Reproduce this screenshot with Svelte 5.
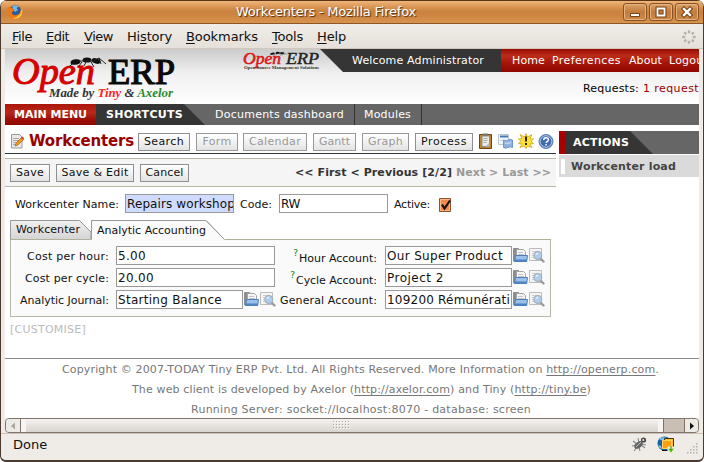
<script>
  function fit(node, width) {
    const natural = node.getBoundingClientRect().width;
    const count = [...node.textContent].length;
    node.style.letterSpacing = `${(width - natural) / count}px`;
  }

  const menus = [
    ['', 'F', 'ile', 20, 14], ['', 'E', 'dit', 23, 15], ['', 'V', 'iew', 29, 14],
    ['Hi', 's', 'tory', 45, 14], ['', 'B', 'ookmarks', 72, 14], ['', 'T', 'ools', 31, 14], ['', 'H', 'elp', 29, 0]
  ];
  const views = [
    ['Search', 52, 40, true, 6], ['Form', 42, 29, false, 5], ['Calendar', 64, 52, false, 6],
    ['Gantt', 43, 31, false, 6], ['Graph', 47, 35, false, 6], ['Process', 58, 46, true, 5]
  ];
  const actions = [['Save', 40, 28], ['Save & Edit', 78, 67], ['Cancel', 49, 38]];
  const rows = [
    { l: 'Cost per hour:', lw: 82, v: '5.00', vw: 28, r: 'Hour Account:', rw: 78, q: true, a: 'Our Super Product', aw: 116 },
    { l: 'Cost per cycle:', lw: 84, v: '20.00', vw: 36, r: 'Cycle Account:', rw: 81, q: true, a: 'Project 2', aw: 57 },
    { l: 'Analytic Journal:', lw: 89, v: 'Starting Balance', vw: 104, r: 'General Account:', rw: 97, q: false, a: '109200 Rémunérati', aw: 123, pick: true }
  ];
</script>

{#snippet t(s, w)}<span class="t" use:fit={w}>{s}</span>{/snippet}

{#snippet picker()}
  <svg class="ic" width="15" height="16" viewBox="0 0 15 16">
    <path d="M.5 14V1.5h5l1 1.5h2v11z" fill="#8b8e90" stroke="#8b8f92" />
    <path d="M3.500 9V2.500h7l2 2V10h-9z" fill="#f5f5f5" stroke="#a5a5a5" />
    <path d="M5 5.500h5M5 7.500h6" stroke="#c5c5c5" />
    <path d="M2.500 8.500h12l-.800 6H1.500z" fill="#9bc0ea" stroke="#4f7fbb" />
    <path d="M2 12.500h12l-.300 2H1.500z" fill="#4d82c4" />
  </svg>
  <svg class="ic" width="16" height="16" viewBox="0 0 16 16">
    <path d="M.500 1.500h12v12H.500z" fill="#f4f4f4" stroke="#bbb" />
    <path d="M3 4.500h7M3 6.500h3M3 8.500h2M3 10.500h2" stroke="#ccc" />
    <path d="M11.500 11.500l3 3" stroke="#9a9a9a" stroke-width="2.400" stroke-linecap="round" />
    <circle cx="8.800" cy="8.500" r="3.900" fill="#afcdee" stroke="#a3afbb" stroke-width="1.200" />
    <path d="M6.800 8q.400-2 2.500-2" stroke="#e8f4ff" fill="none" stroke-width="1.200" />
  </svg>
{/snippet}

{#snippet ant()}
  <g fill="#111" stroke="none">
    <ellipse cx="70.500" cy="13" rx="5" ry="2.700" transform="rotate(-8 70.500 13)" />
    <ellipse cx="82" cy="11" rx="4.500" ry="2.600" />
    <ellipse cx="91" cy="12" rx="4.500" ry="2.600" transform="rotate(15 91 12)" />
  </g>
  <path d="M67 15l-2 2M74 12h16M77 13l-3 4M81 13l-2 4M86 13l3 5M90 11l4-2 2 6M94 9l7 6" fill="none" stroke="#222" stroke-width="1" />
{/snippet}

<div class="window">
  <header class="title">
    <svg width="16" height="16" viewBox="0 0 16 16">
      <circle cx="8" cy="8" r="7.500" fill="#e8831b" />
      <circle cx="8.200" cy="7" r="5.800" fill="#285c9c" />
      <path d="M5 2q4-1.700 7 .500L9.500 4 11 6 8 8 6 5z" fill="#76b6de" />
      <path d="M1 3q1 1 2.700.800Q7 4 6.700 7L4.500 8.400q1.500 3.500 5 2.600 3.600-.900 3.800-4l1.500-1.500Q16 12 11.500 14.400 6 16.600 2.200 12.600-.600 8.300 1 3z" fill="#ee7918" />
      <path d="M11.500 11.500q2.700-1.300 2.600-5L15 5q1.300 5-2.300 8.200-4 3-8 .500 4 .900 6.800-2.200z" fill="#fbc640" />
    </svg>
    <h1>{@render t('Workcenters - Mozilla Firefox', 180)}</h1>
    <div class="wbs">
      <b><svg width="22" height="16" viewBox="0 0 22 16"><path d="M6.500 9.500h9v3h-9z" fill="#fff" stroke="#744319" /></svg></b>
      <b><svg width="22" height="16" viewBox="0 0 22 16"><path d="M7.500 4.500h7v7h-7z" fill="none" stroke="#744319" stroke-width="4" /><path d="M7.500 4.500h7v7h-7z" fill="none" stroke="#fff" stroke-width="1.800" /></svg></b>
      <b><svg width="22" height="16" viewBox="0 0 22 16"><path d="M8 5l6 6M14 5l-6 6" stroke="#744319" stroke-width="4.500" stroke-linecap="square" /><path d="M8 5l6 6M14 5l-6 6" stroke="#fff" stroke-width="2.400" stroke-linecap="square" /></svg></b>
    </div>
  </header>

  <nav class="menu">
    {#each menus as [a, u, b, w, gap]}
      <span class="mi" style:width="{w}px" style:margin-right="{gap}px"><span class="t" use:fit={w}>{a}<u>{u}</u>{b}</span></span>
    {/each}
    <svg class="throb" width="14" height="14" viewBox="-7 -7 14 14">
      {#each [0, 45, 90, 135, 180, 225, 270, 315] as d}
        <rect x="-1.200" y="-6.800" width="2.400" height="3" rx=".8" fill="#b3b0aa" transform="rotate({d})" />
      {/each}
    </svg>
  </nav>

  <main>
    <div class="banner">
      <svg class="logo" width="180" height="55" viewBox="0 0 180 55">
        <text x="7" y="34.500" font-size="37" font-style="italic" fill="#d60000" stroke="#d60000" stroke-width="1" textLength="83" lengthAdjust="spacingAndGlyphs">Open</text>
        <text x="103" y="34.500" font-size="36" fill="#0a0a0a" stroke="#0a0a0a" stroke-width="1.200" textLength="67" lengthAdjust="spacingAndGlyphs">ERP</text>
        {@render ant()}
        <text x="44" y="48" font-size="13" font-style="italic" font-weight="bold" fill="#333" textLength="124" lengthAdjust="spacingAndGlyphs">Made by <tspan fill="#f22">Tiny</tspan> &amp; <tspan fill="#27892b">Axelor</tspan></text>
      </svg>
      <svg class="mini" width="78" height="24" viewBox="0 0 78 24">
        <text x="0" y="14.500" font-size="16" font-style="italic" fill="#d91a1a" stroke="#d91a1a" stroke-width=".6" textLength="38" lengthAdjust="spacingAndGlyphs">Open</text>
        <text x="43" y="14.500" font-size="16" font-style="italic" fill="#222" stroke="#222" stroke-width=".4" textLength="33" lengthAdjust="spacingAndGlyphs">ERP</text>
        <g transform="translate(-3,-.500) scale(.46,.4)">{@render ant()}</g>
        <text x="1" y="20" font-size="5" font-weight="bold" fill="#333" textLength="75" lengthAdjust="spacingAndGlyphs">Open Source Management Solutions</text>
      </svg>
      <div class="account">
        <div class="top">
          <div class="welcome">{@render t('Welcome Administrator', 132)}</div>
          <div class="links">
            <span class="lk1">{@render t('Home', 33)}</span><span class="lk2">{@render t('Preferences', 69)}</span><span class="lk3">{@render t('About', 33)}</span>{@render t('Logout', 39)}
          </div>
        </div>
        <div class="req"><span class="rq">{@render t('Requests:', 56)}</span><em>{@render t('1 request', 56)}</em></div>
      </div>
    </div>

    <div class="bar">
      <div class="mm">{@render t('MAIN MENU', 73)}</div>
      <div class="sc">{@render t('SHORTCUTS', 77)}</div>
      <div class="sh d">{@render t('Documents dashboard', 129)}</div>
      <div class="sh m">{@render t('Modules', 47)}</div>
    </div>

    <div class="cols">
      <section class="left">
        <div class="tools">
          <svg class="note" width="13" height="15" viewBox="0 0 13 15">
            <path d="M.500.500h8l2.500 2.500v11H.500z" fill="#e9e9e7" stroke="#9b9b98" />
            <path d="M2 4.500h6M2 6.500h6M2 8.500h4M2 10.500h4" stroke="#aaa" />
            <path d="M4 12l1-3 6-6 2 2-6 6z" fill="#f3951e" stroke="#8b5a1c" stroke-width=".6" />
            <path d="M10 4l1.500-1.500L13 4l-1.500 1.500z" fill="#cb3f33" />
          </svg>
          <h2>{@render t('Workcenters', 105)}</h2>
          {#each views as [s, w, tw, on, gap]}
            <button class:off={!on} style:width="{w}px" style:margin-right="{gap}px">{@render t(s, tw)}</button>
          {/each}
          <svg class="i1" width="14" height="16" viewBox="0 0 14 16">
            <path d="M.500 1.500h12v14H.500z" fill="#bf842e" stroke="#70440f" /><path d="M3 3h7.500v10.500H3z" fill="#ecebe7" stroke="#8c8d87" /><path d="M4 .500h5v2.500H4z" fill="#777" /><path d="M4.500 5.500h4M4.500 7.500h4M4.500 9.500h3" stroke="#aaa" /><path d="M10.500 9.500v4h-4z" fill="#bbb" />
          </svg>
          <svg class="i2" width="16" height="16" viewBox="0 0 16 16">
            <path d="M.500 1.500h10v10H.500z" fill="#f3f6f8" stroke="#b9c4cc" /><path d="M2 2.500h8v2H2z" fill="#4678b5" /><path d="M2 7.500h4" stroke="#c4d0da" />
            <path d="M5.500 7q3 1.500 4.500 0t4.500 0v7.500q-2-1.300-4.500 0t-4.500 0z" fill="#8eb3df" stroke="#6d96c8" /><path d="M7 10q3 1 6-.500" stroke="#dbe9f7" fill="none" />
          </svg>
          <svg class="i3" width="16" height="16" viewBox="0 0 16 16">
            <path d="M8 .700l1.600 3.300L14 1.500l-2 4 3.500.500-2.500 2.300 2.500 2.200-3.500.500 2 3.500-4.400-1.500L8 15.500l-1.700-2.500L2 14.500l2-3.500-3.500-.500L3 8.300.500 6 4 5.500 2 1.500 6.400 4z" fill="#ffe333" stroke="#d4ac2b" stroke-width=".9" />
            <path d="M8 3.500v5M8 10v2" stroke="#2d2300" stroke-width="2" />
          </svg>
          <svg class="i4" width="16" height="16" viewBox="0 0 16 16">
            <circle cx="8" cy="8.500" r="7" fill="#3e6cae" stroke="#5d82b8" /><circle cx="8" cy="8.500" r="5.800" fill="none" stroke="#b9cce6" stroke-width="1" />
            <path d="M5.700 7q0-2.300 2.400-2.300t2.300 2q0 1.300-1.300 2-.900.500-.900 1.300M8.100 11v1.500" fill="none" stroke="#fff" stroke-width="1.500" />
          </svg>
        </div>
        <div class="pager">
          {#each actions as [s, w, tw]}
            <button style:width="{w}px">{@render t(s, tw)}</button>
          {/each}
          <div class="pg"><span class="pa">{@render t('<< First < Previous [2/2]', 157)}</span><span class="pz">{@render t('Next > Last >>', 95)}</span></div>
        </div>
        <div class="form1">
          <label class="w1" for="f1">{@render t('Workcenter Name:', 104)}</label>
          <div class="in req1" id="f1">{@render t('Repairs workshop', 108)}</div>
          <label class="w2" for="f2">{@render t('Code:', 32)}</label>
          <div class="in code" id="f2">{@render t('RW', 19)}</div>
          <label class="w3" for="f3">{@render t('Active:', 36)}</label>
          <svg width="13" height="14" viewBox="0 0 13 14"><path d="M.500.500h11v13H.500z" fill="#f4894a" stroke="#8b5530" /><path d="M1.500 1.500h9v11h-9z" fill="none" stroke="#ffb78a" /><path d="M3 6.500l2.500 4L11 2.500" fill="none" stroke="#111" stroke-width="2.200" /></svg>
        </div>
        <div class="tabs">
          <svg width="541" height="20" viewBox="0 0 541 20">
            <defs><linearGradient id="tg" x2="0" y2="1"><stop stop-color="#f0f0f0" /><stop offset="1" stop-color="#d3d3d3" /></linearGradient></defs>
            <path d="M.500 20V.500H69.500L81 12V20z" fill="url(#tg)" stroke="#999" />
            <path d="M81.500 20V.500H196L214.500 19.500V20z" fill="#fafafa" />
            <path d="M0 19.500H81.500V.500H196L214.500 19.500H541" fill="none" stroke="#b3b09c" />
            <path d="M81.500 19V.500H196L214 19" fill="none" stroke="#999" />
          </svg>
          <div class="tl"><span class="ta">{@render t('Workcenter', 64)}</span><span class="tb">{@render t('Analytic Accounting', 109)}</span></div>
        </div>
        <div class="panel">
          {#each rows as r}
            <div class="row">
              <label class="ll" for="x">{@render t(r.l, r.lw)}</label>
              <div class="in lv" class:short={r.pick}>{@render t(r.v, r.vw)}</div>
              {#if r.pick}<div class="icons">{@render picker()}</div>{/if}
              <label class="rl" class:low={r.q} for="x">{#if r.q}<sup>?</sup>{/if}{@render t(r.r, r.rw)}</label>
              <div class="in rv">{@render t(r.a, r.aw)}</div>
              <div class="icons">{@render picker()}</div>
            </div>
          {/each}
        </div>
        <div class="cust">{@render t('[CUSTOMISE]', 76)}</div>
      </section>
      <aside>
        <div class="ah">
          <div class="al">{@render t('ACTIONS', 56)}</div>
        </div>
        <div class="ai">{@render t('Workcenter load', 105)}</div>
      </aside>
    </div>

    <footer>
      <p class="p1"><span class="t" use:fit={597}>Copyright © 2007-TODAY Tiny ERP Pvt. Ltd. All Rights Reserved. More Information on <u>http://openerp.com</u>.</span></p>
      <p class="p2"><span class="t" use:fit={459}>The web client is developed by Axelor (<u>http://axelor.com</u>) and Tiny (<u>http://tiny.be</u>)</span></p>
      <p class="p3">{@render t('Running Server: socket://localhost:8070 - database: screen', 340)}</p>
    </footer>
  </main>

  <div class="scroll">
    <div class="arrow l"><svg width="14" height="14" viewBox="0 0 14 14"><path d="M9 3.500v7L5 7z" fill="#aaa79e" /></svg></div>
    <div class="thumb">
      <svg width="18" height="9" viewBox="0 0 18 9">
        {#each [0, 3, 6, 9, 12, 15] as x}{#each [0, 3, 6] as y}<rect {x} {y} width="1" height="1" fill="#aaa59e" /><rect x={x + 1} y={y + 1} width="1" height="1" fill="#fff" />{/each}{/each}
      </svg>
    </div>
    <div class="trough"></div>
    <div class="arrow r"><svg width="14" height="14" viewBox="0 0 14 14"><path d="M5 3.500v7L9 7z" fill="#111" /></svg></div>
  </div>

  <div class="status">
    <span>{@render t('Done', 34)}</span>
    <svg class="bug" width="17" height="17" viewBox="0 0 17 17">
      <path d="M2 5l4 3M1 10l5-1M3 15l3-4M7 2l1 5M9 15l-1-4M14 12l-4-3M15 9l-4-1" stroke="#888" stroke-width="1.100" />
      <ellipse cx="7.500" cy="9" rx="4.800" ry="3" fill="#666" transform="rotate(-40 7.500 9)" /><path d="M5 11l5-5" stroke="#bbb" />
      <circle cx="12.500" cy="4" r="2.600" fill="#444" /><circle cx="12.300" cy="4" r="1.100" fill="#eee" />
    </svg>
    <svg class="net" width="19" height="18" viewBox="0 0 19 18">
      <circle cx="7.500" cy="7.500" r="7" fill="#1762a9" /><path d="M2 3q4-3 8-1L7 5 4 4zM1 9l3 1 1 3q-3-1-4-4z" fill="#82c4ec" />
      <path d="M7.500 2.500h9v9h-9z" fill="#ffc22a" stroke="#3a3220" /><path d="M5.500 4.500h9v8h-9z" fill="#ff9e16" stroke="#ffd255" /><path d="M5 14.500h6" stroke="#111" />
      <path d="M10.500 10.500h7v7h-7z" fill="#e9efd9" /><path d="M14 10v4M12.500 13.500h3L14 15.500z" fill="#4faf18" stroke="#4faf18" stroke-width="1.300" />
    </svg>
    <svg class="grip" width="12" height="12" viewBox="0 0 12 12">
      {#each [[9, 0], [6, 3], [9, 3], [3, 6], [6, 6], [9, 6], [0, 9], [3, 9], [6, 9], [9, 9]] as [x, y]}<rect {x} {y} width="1.500" height="1.500" fill="#b4afa8" />{/each}
    </svg>
  </div>
</div>

<style>
  :global(body) { background: #fff; }
  * { box-sizing: border-box; }
  .window { width: 704px; height: 462px; display: flex; flex-direction: column; border: 1px solid #4b3a30; border-width: 0 1px 2px; border-radius: 7px 7px 6px 6px; background: #efebe7; overflow: hidden; font: 11px 'DejaVu Sans', sans-serif; color: #111; }
  .t { white-space: pre; display: inline-block; flex: none; }
  svg { flex: none; display: block; }
  .title { height: 24px; flex: none; display: flex; align-items: center; border-top: 1px solid #5b3515; border-bottom: 1px solid #8c5626; background: linear-gradient(#efb57b, #dc9856 25%, #cb8341 45%, #cc8340 60%, #d7944d); padding-left: 6px; }
  h1 { font-size: 13px; font-weight: normal; color: #fff; text-shadow: 1px 1px 1px #4b2a0e; margin: 0 0 0 213px; line-height: 22px; width: 180px; }
  .wbs { display: flex; gap: 2px; margin-left: 207px; }
  .wbs b { width: 24px; height: 18px; border: 1px solid #8a5221; border-radius: 3px; background: linear-gradient(#dda46b, #c27b3a 50%, #cd894a); box-shadow: inset 0 0 0 1px #e2b483; }
  .menu { height: 25px; flex: none; display: flex; align-items: center; padding-left: 11px; background: linear-gradient(#f0ede8, #e5e0d9); border-bottom: 1px solid #d1c7bb; font-size: 13px; }
  .mi { flex: none; white-space: pre; }
  .mi u { text-underline-offset: 2px; text-decoration-thickness: 1px; }
  .throb { margin-left: auto; margin-right: 7px; margin-top: 2px; }
  main { margin: 0 4px; width: 694px; height: 369px; flex: none; background: #fff; overflow: hidden; }
  .banner { height: 55px; display: flex; background: linear-gradient(#cbcbcb, #f0f0f0 45%, #fff); font-size: 11px; }
  .logo, .mini { font-family: 'Liberation Serif', serif; }
  .mini { margin-left: 58px; }
  .account { flex: none; width: 378px; }
  .top { height: 23px; display: flex; color: #fff; line-height: 23px; }
  .welcome { width: 181px; flex: none; margin-left: -1px; padding-left: 32px; background: #353535; clip-path: polygon(0 0, 100% 0, 100% 100%, 23px 100%); }
  .links { width: 198px; display: flex; padding-left: 11px; background: linear-gradient(#970c04, #bc2c19 30%, #a81508 60%, #8e0600); overflow: hidden; }
  .links span { flex: none; }
  .lk1 { width: 40px; } .lk2 { width: 77px; } .lk3 { width: 40px; }
  .req { display: flex; height: 32px; line-height: 33px; padding-left: 262px; font-size: 11px; color: #000; }
  .rq { width: 61px; }
  em { font-style: normal; color: #900; }
  .bar { height: 21px; display: flex; background: #666; color: #fff; line-height: 21px; }
  .mm { width: 91px; padding-left: 9px; font-weight: bold; background: linear-gradient(#ac160a, #b9291a 40%, #9f1107 70%, #8f0600); }
  .sc { width: 109px; padding-left: 10px; font-weight: bold; background: #353535; clip-path: polygon(0 0, 88px 0, 109px 100%, 0 100%); }
  .sh { border-right: 1px solid #333; }
  .d { width: 150px; padding-left: 10px; } .m { width: 67px; padding-left: 9px; }
  .cols { display: flex; gap: 3px; height: 233px; }
  .left { width: 551px; flex: none; display: flex; flex-direction: column; }
  .tools { height: 29px; display: flex; padding-top: 8px; border-bottom: 1px solid #2f3a33; }
  .note { margin: 1px 5px 0 6px; }
  h2 { font-size: 15px; margin: -1px 4px 0 0; line-height: 18px; width: 105px; color: #900; }
  button { height: 18px; flex: none; padding: 0; border: 1px solid #8f8f8f; background: linear-gradient(#fff, #e3e3e3); font: 11px/16px 'DejaVu Sans', sans-serif; color: #111; display: flex; justify-content: center; align-items: center; border-radius: 0; overflow: visible; }
  button.off { color: #999; border-color: #999; }
  .i1 { margin-left: 1px; } .i2 { margin-left: 5px; } .i3 { margin-left: 4px; } .i4 { margin-left: 4px; }
  .pager { margin-top: 4px; height: 29px; display: flex; align-items: flex-start; gap: 6px; padding: 5px 0 0 5px; background: #f5f5f5; border-top: 1px solid #b8b6a4; border-bottom: 1px solid #b8b6a4; font-weight: bold; }
  .pg { display: flex; margin-left: 100px; color: #333; line-height: 18px; }
  .pa { width: 161px; } .pz { color: #999; }
  .form1 { display: flex; margin-top: 7px; height: 26px; padding-left: 10px; }
  .form1 label { line-height: 21px; flex: none; }
  .form1 svg { margin-top: 4px; }
  .in { height: 19px; border: 1px solid #999; background: #fff; font-size: 12px; line-height: 18px; padding-left: 1px; overflow: hidden; flex: none; color: #111; }
  .w1 { width: 110px; } .w2 { width: 39px; } .w3 { width: 45px; }
  .req1 { width: 109px; margin-right: 6px; background: #cfdcff; }
  .code { width: 109px; margin-right: 6px; }
  .tabs { height: 20px; flex: none; display: grid; margin-left: 5px; width: 541px; }
  .tabs > * { grid-area: 1 / 1; }
  .tl { display: flex; padding-left: 6px; line-height: 21px; z-index: 1; }
  .ta { width: 81px; line-height: 19px; }
  .panel { margin-left: 5px; width: 541px; height: 77px; border: 1px solid #b8b6a4; border-top: 0; background: #fafafa; padding-top: 6px; display: flex; flex-direction: column; gap: 3px; }
  .row { display: flex; height: 19px; flex: none; line-height: 21px; }
  .ll { width: 98px; text-align: right; margin-right: 7px; }
  .lv { width: 159px; } .lv.short { width: 127px; }
  .icons { display: flex; width: 32px; gap: 1px; padding: 1px 0 0 1px; flex: none; }
  .rl { width: 102px; margin-right: 8px; text-align: right; white-space: nowrap; }
  .low { line-height: 25px; }
  sup { color: #080; font-size: 9px; line-height: 0; vertical-align: 6px; margin-right: 1px; }
  .rv { width: 127px; }
  .cust { padding-left: 5px; margin-top: 6px; color: #bbb; line-height: 14px; }
  aside { width: 140px; padding-top: 6px; }
  .ah { height: 23px; background: #666; border-left: 7px solid #a90000; }
  .al { height: 23px; width: 87px; padding-left: 7px; background: #353535; color: #fff; font-weight: bold; line-height: 23px; clip-path: polygon(0 0, 64px 0, 87px 100%, 0 100%); }
  .ai { margin-top: 1px; height: 22px; background: #dadada; color: #444; font-weight: bold; line-height: 23px; padding-left: 8px; display: flex; }
  .ai::before { content: ''; width: 4px; height: 15px; margin: 4px 0 0 -6px; background: #fff; }
  .ai .t { margin-left: 6px; }
  footer { border-top: 1px solid #888; color: #777; line-height: 21px; }
  p { margin: 0; height: 20px; white-space: nowrap; }
  .p1 { padding-left: 57px; } .p2 { padding-left: 127px; } .p3 { padding-left: 186px; }
  footer u { text-underline-offset: 2px; text-decoration-thickness: 1px; }
  .scroll { height: 15px; flex: none; margin: 0 4px; display: flex; border: 1px solid #81736a; border-radius: 4px; background: #c9bfb5; overflow: hidden; }
  .arrow { width: 14px; background: #eeeae6; }
  .r { border-left: 1px solid #81736a; }
  .thumb { flex: 1; border-left: 1px solid #81736a; border-right: 1px solid #81736a; background: linear-gradient(#f5f3f1, #d9d4ce); box-shadow: inset 6px 0 0 -1px #f7f5f3, inset -6px 0 0 -1px #f7f5f3; display: flex; align-items: center; justify-content: center; }
  .trough { width: 20px; }
  .status { flex: 1; display: flex; border-top: 1px solid #cbc3b9; padding-left: 12px; font-size: 13px; line-height: 22px; }
  .status span { width: 34px; }
  .bug { margin: 2px 0 0 584px; } .net { margin: 2px 0 0 9px; } .grip { margin: 9px 0 0 11px; }
</style>
